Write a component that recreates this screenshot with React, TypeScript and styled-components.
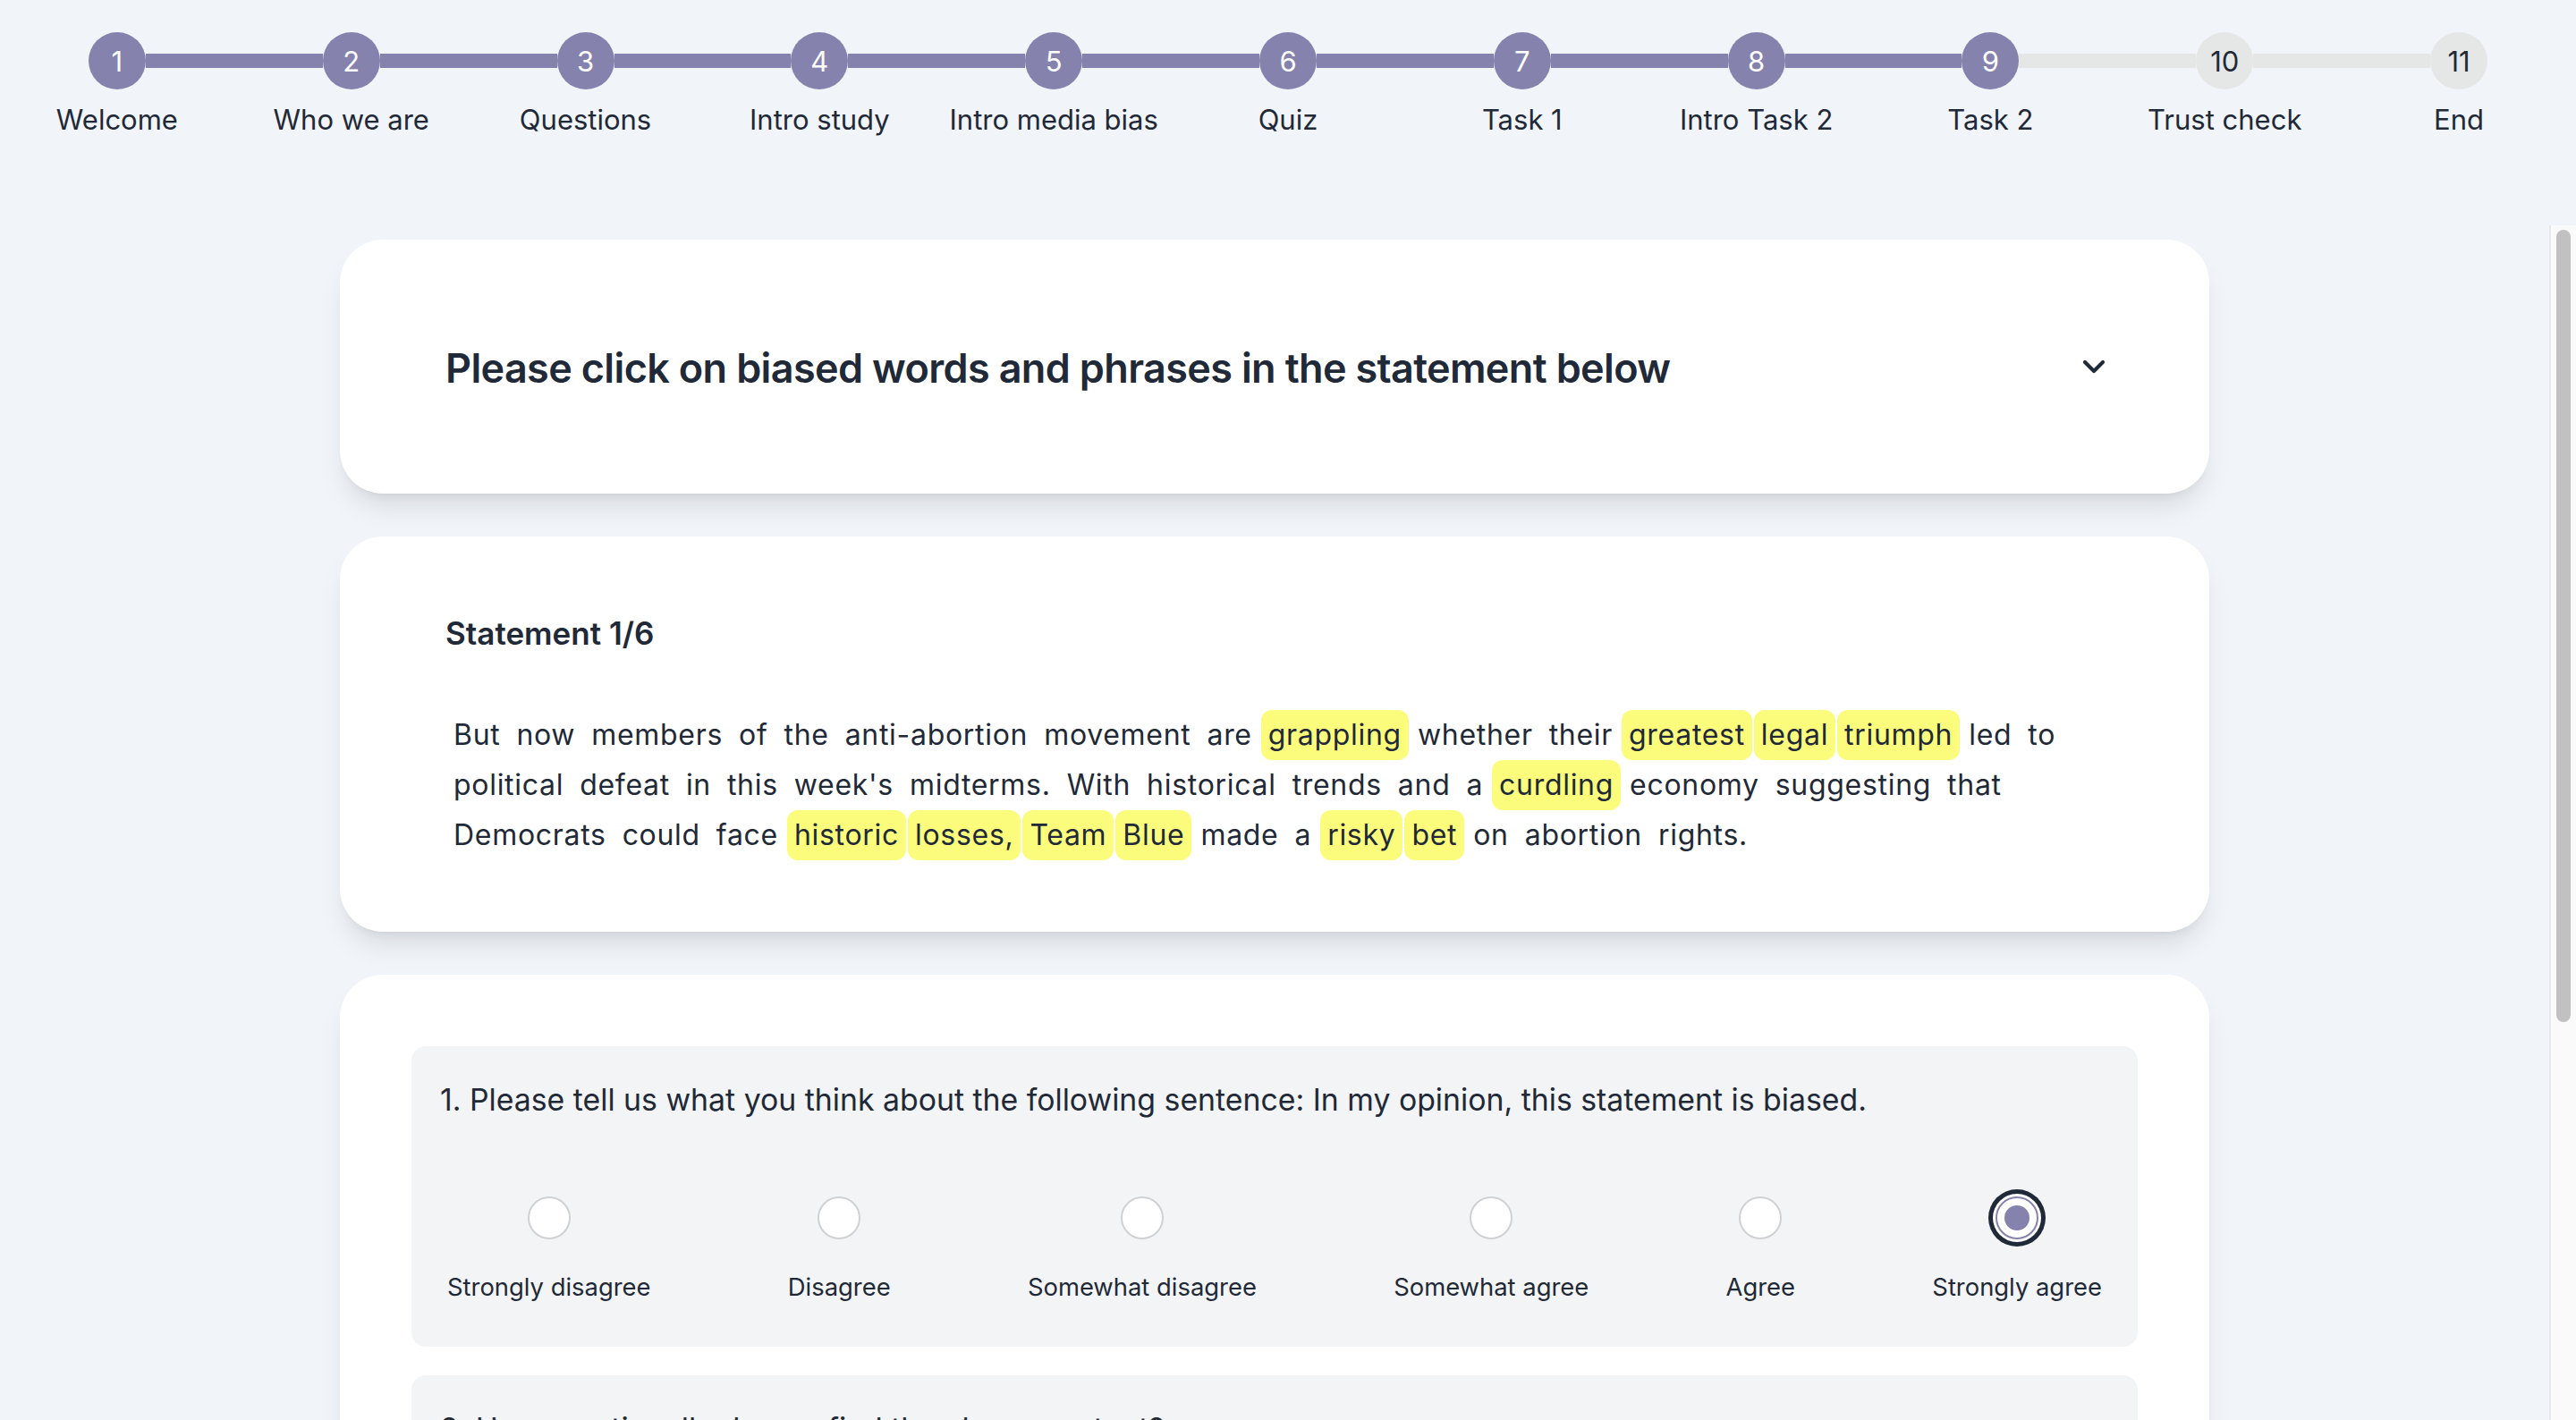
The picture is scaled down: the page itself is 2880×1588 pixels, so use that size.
import React from "react";
import styled, { createGlobalStyle } from "styled-components";

const PURPLE = "#8583ad";
const INK = "#1f2937";
const BG = "#f1f4f9";

const GlobalStyle = createGlobalStyle`
  html, body { margin: 0; padding: 0; height: 100%; }
  body {
    background: ${BG};
    font-family: Inter, "Noto Sans", "Liberation Sans", sans-serif;
    color: ${INK};
    overflow: hidden;
  }
  #root { height: 100%; }
  * { box-sizing: border-box; }
`;

const Page = styled.div`
  height: 100vh;
  display: flex;
  flex-direction: column;
`;

const Stepper = styled.nav`
  flex: 0 0 252px;
  padding-top: 36px;
  display: grid;
  grid-template-columns: repeat(11, 1fr);
`;

const Step = styled.div`
  display: flex;
  flex-direction: column;
  align-items: center;
`;

const Track = styled.div`
  width: 100%;
  display: flex;
  align-items: center;
`;

const Connector = styled.div<{ $tone: "done" | "todo" | "none" }>`
  flex: 1;
  height: 16px;
  background: ${(p) =>
    p.$tone === "done" ? PURPLE : p.$tone === "todo" ? "#e5e6e6" : "transparent"};
`;

const Dot = styled.div<{ $done: boolean }>`
  width: 64px;
  height: 64px;
  border-radius: 50%;
  flex: 0 0 64px;
  display: flex;
  align-items: center;
  justify-content: center;
  font-size: 31px;
  background: ${(p) => (p.$done ? PURPLE : "#e5e6e6")};
  color: ${(p) => (p.$done ? "#ffffff" : INK)};
`;

const StepLabel = styled.div`
  margin-top: 10px;
  font-size: 31px;
  line-height: 48px;
  white-space: nowrap;
`;

const Body = styled.div`
  flex: 1;
  min-height: 0;
  display: flex;
`;

const Viewport = styled.main`
  flex: 1;
  min-width: 0;
  overflow: hidden;
`;

const ScrollTrack = styled.div`
  flex: 0 0 30px;
  background: #fafafa;
  border-left: 2px solid #e8e8e8;
  padding: 5px 6px 0 6px;
`;

const ScrollThumb = styled.div`
  height: 886px;
  border-radius: 8px;
  background: #c1c1c1;
`;

const Content = styled.div`
  width: 2090px;
  margin: 0 auto;
  padding: 16px 0 48px;
  display: flex;
  flex-direction: column;
  gap: 48px;
`;

const Card = styled.section<{ $pad: string }>`
  background: #ffffff;
  border-radius: 48px;
  padding: ${(p) => p.$pad};
  box-shadow: 0 20px 30px -6px rgba(0, 0, 0, 0.1), 0 8px 12px -8px rgba(0, 0, 0, 0.1);
`;

const HeaderRow = styled.div`
  min-height: 124px;
  display: flex;
  align-items: center;
  justify-content: space-between;
`;

const Title = styled.h1`
  margin: 2px 0 0;
  font-size: 45px;
  font-weight: 600;
  letter-spacing: -0.65px;
`;

const Chevron = styled.svg`
  width: 40px;
  height: 40px;
  color: ${INK};
`;

const StatementTitle = styled.h2`
  margin: 0 0 58px;
  font-size: 35px;
  line-height: 56px;
  font-weight: 600;
`;

const Paragraph = styled.p`
  margin: 0;
  display: flex;
  flex-wrap: wrap;
  font-size: 32px;
  line-height: 56px;
  letter-spacing: 0.7px;
`;

const Word = styled.span<{ $hl: boolean }>`
  padding: 0 8px;
  margin: 0 1px;
  border-radius: 12px;
  white-space: nowrap;
  background: ${(p) => (p.$hl ? "#fcfc7c" : "transparent")};
`;

const QuestionList = styled.div`
  display: flex;
  flex-direction: column;
  gap: 32px;
`;

const QuestionBox = styled.div`
  background: #f3f4f6;
  border-radius: 16px;
  padding: 32px 32px 47px;
`;

const QuestionText = styled.p`
  margin: 0 0 80px;
  font-size: 33.8px;
  line-height: 56px;
`;

const Options = styled.div`
  display: flex;
  justify-content: space-between;
  padding: 0 8px;
`;

const Option = styled.label`
  display: flex;
  flex-direction: column;
  align-items: center;
  gap: 33px;
`;

const Radio = styled.span<{ $checked: boolean }>`
  width: 48px;
  height: 48px;
  border-radius: 50%;
  background: #ffffff;
  border: 2px solid ${(p) => (p.$checked ? PURPLE : "#cfd1d4")};
  display: flex;
  align-items: center;
  justify-content: center;
  box-shadow: ${(p) => (p.$checked ? `0 0 0 3px #ffffff, 0 0 0 8px ${INK}` : "none")};
`;

const RadioDot = styled.span`
  width: 28px;
  height: 28px;
  border-radius: 50%;
  background: ${PURPLE};
`;

const OptionLabel = styled.span`
  font-size: 27.4px;
  line-height: 40px;
`;

const steps = [
  "Welcome",
  "Who we are",
  "Questions",
  "Intro study",
  "Intro media bias",
  "Quiz",
  "Task 1",
  "Intro Task 2",
  "Task 2",
  "Trust check",
  "End",
];
const current = 9;

const statement: [string, boolean][] = [
  ["But", false], ["now", false], ["members", false], ["of", false], ["the", false],
  ["anti-abortion", false], ["movement", false], ["are", false], ["grappling", true],
  ["whether", false], ["their", false], ["greatest", true], ["legal", true], ["triumph", true],
  ["led", false], ["to", false], ["political", false], ["defeat", false], ["in", false],
  ["this", false], ["week's", false], ["midterms.", false], ["With", false], ["historical", false],
  ["trends", false], ["and", false], ["a", false], ["curdling", true], ["economy", false],
  ["suggesting", false], ["that", false], ["Democrats", false], ["could", false], ["face", false],
  ["historic", true], ["losses,", true], ["Team", true], ["Blue", true], ["made", false],
  ["a", false], ["risky", true], ["bet", true], ["on", false], ["abortion", false], ["rights.", false],
];

const scale = [
  "Strongly disagree",
  "Disagree",
  "Somewhat disagree",
  "Somewhat agree",
  "Agree",
  "Strongly agree",
];

function Question({ text, selected }: { text: string; selected: number | null }) {
  return (
    <QuestionBox>
      <QuestionText>{text}</QuestionText>
      <Options>
        {scale.map((s, i) => (
          <Option key={s}>
            <Radio $checked={selected === i}>{selected === i && <RadioDot />}</Radio>
            <OptionLabel>{s}</OptionLabel>
          </Option>
        ))}
      </Options>
    </QuestionBox>
  );
}

export default function App() {
  return (
    <Page>
      <GlobalStyle />
      <Stepper>
        {steps.map((label, i) => {
          const n = i + 1;
          const done = n <= current;
          const left = i === 0 ? "none" : done ? "done" : "todo";
          const right = i === steps.length - 1 ? "none" : n + 1 <= current ? "done" : "todo";
          return (
            <Step key={label}>
              <Track>
                <Connector $tone={left} />
                <Dot $done={done}>{n}</Dot>
                <Connector $tone={right} />
              </Track>
              <StepLabel>{label}</StepLabel>
            </Step>
          );
        })}
      </Stepper>
      <Body>
        <Viewport>
          <Content>
            <Card $pad="80px 109px 80px 118px">
              <HeaderRow>
                <Title>Please click on biased words and phrases in the statement below</Title>
                <Chevron viewBox="0 0 24 24" fill="none" stroke="currentColor" strokeWidth={2.5} strokeLinecap="round" strokeLinejoin="round">
                  <path d="m6 9 6 6 6-6" />
                </Chevron>
              </HeaderRow>
            </Card>
            <Card $pad="80px 118px">
              <StatementTitle>Statement 1/6</StatementTitle>
              <Paragraph>
                {statement.map(([w, hl], i) => (
                  <Word key={i} $hl={hl}>{w}</Word>
                ))}
              </Paragraph>
            </Card>
            <Card $pad="80px">
              <QuestionList>
                <Question
                  text="1. Please tell us what you think about the following sentence: In my opinion, this statement is biased."
                  selected={5}
                />
                <Question text="2. How emotionally do you find the above content?" selected={null} />
              </QuestionList>
            </Card>
          </Content>
        </Viewport>
        <ScrollTrack>
          <ScrollThumb />
        </ScrollTrack>
      </Body>
    </Page>
  );
}
